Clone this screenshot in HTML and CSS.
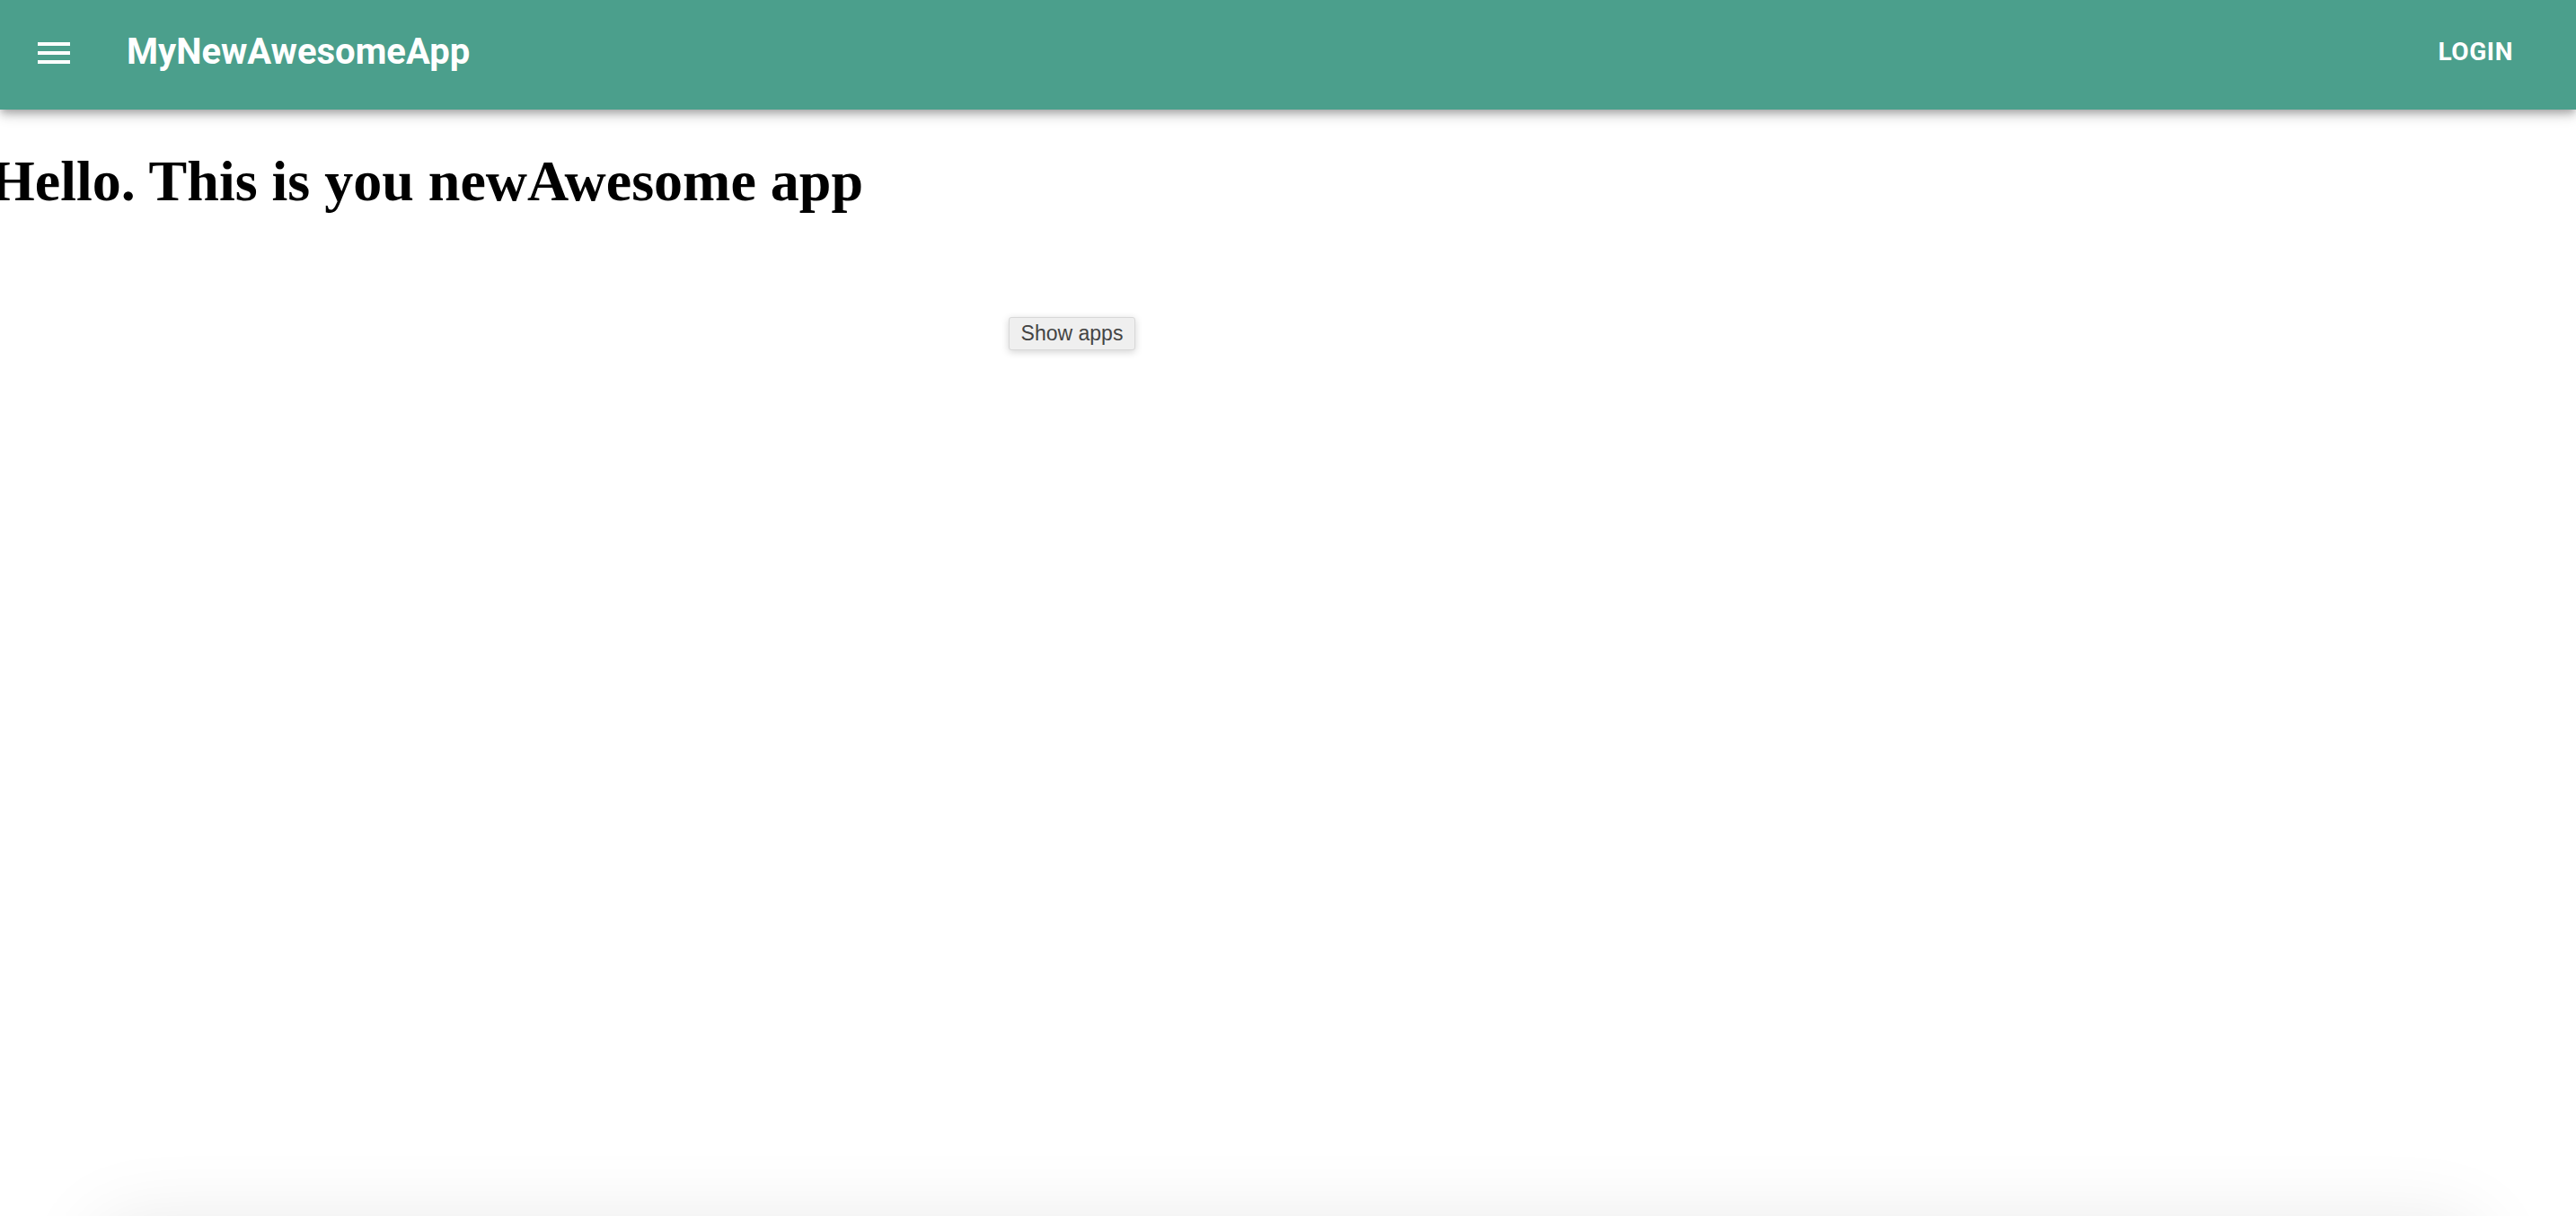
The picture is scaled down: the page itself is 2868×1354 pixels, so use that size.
FILE: index.html
```html
<!DOCTYPE html>
<html>
<head>
<meta charset="utf-8">
<title>MyNewAwesomeApp</title>
<link rel="stylesheet" href="styles.css">
</head>
<body>
<header class="appbar">
  <button class="menu-btn" aria-label="menu">
    <svg viewBox="0 0 24 24" class="menu-icon"><path d="M3 18h18v-2H3v2zm0-5h18v-2H3v2zm0-7v2h18V6H3z" fill="#fff"/></svg>
  </button>
  <div class="title">MyNewAwesomeApp</div>
  <button class="login">Login</button>
</header>
<main class="content">
  <h1 class="hello">Hello. This is you newAwesome app</h1>
  <div class="actions">
    <button class="show-apps">Show apps</button>
  </div>
  <section class="card"></section>
</main>
</body>
</html>
```
FILE: styles.css
```css
html, body {
  margin: 0;
  padding: 0;
  background: #fff;
  overflow: hidden;
}
body {
  font-family: "Liberation Serif", serif;
}
.appbar {
  position: relative;
  z-index: 2;
  display: flex;
  align-items: center;
  height: 122px;
  background: #4b9f8c;
  color: #fff;
  box-shadow: 0 4px 8px -2px rgba(0,0,0,0.25), 0 8px 10px 0 rgba(0,0,0,0.12), 0 2px 20px 0 rgba(0,0,0,0.10);
  padding: 0 32px 0 36px;
}
.menu-btn {
  background: none;
  border: 0;
  padding: 0;
  width: 48px;
  height: 48px;
  display: flex;
  align-items: center;
  justify-content: center;
  cursor: pointer;
  margin-bottom: 4px;
}
.menu-icon {
  width: 48px;
  height: 48px;
  display: block;
}
.title {
  font-family: Roboto, "Liberation Sans", sans-serif;
  font-weight: 700;
  font-size: 40px;
  letter-spacing: 0;
  margin-left: 57px;
  flex: 1;
  line-height: 1;
  padding-bottom: 6px;
}
.login {
  background: none;
  border: 0;
  color: #fff;
  font-family: Roboto, "Liberation Sans", sans-serif;
  font-weight: 700;
  font-size: 28px;
  letter-spacing: 0.6px;
  text-transform: uppercase;
  padding: 12px 38px;
  margin-bottom: 8px;
  cursor: pointer;
}
.content {
  display: flex;
  flex-direction: column;
}
.hello {
  font-size: 64px;
  font-weight: bold;
  margin: 43px 0 43px -11px;
  white-space: nowrap;
  color: #000;
}
.actions {
  padding-top: 71px;
  padding-left: 1123px;
}
.show-apps {
  font-family: "Liberation Sans", Arial, sans-serif;
  font-size: 23px;
  color: #444;
  background: #efefef;
  border: 1px solid #d8d8d8;
  border-radius: 3px;
  height: 37px;
  width: 141px;
  padding: 0;
  box-shadow: 0 2px 8px rgba(0,0,0,0.18);
}
.card {
  margin: 975px 110px 0 110px;
  height: 400px;
  background: #fff;
  border-radius: 24px;
  box-shadow: 0 0 90px rgba(0,0,0,0.10);
}
```
